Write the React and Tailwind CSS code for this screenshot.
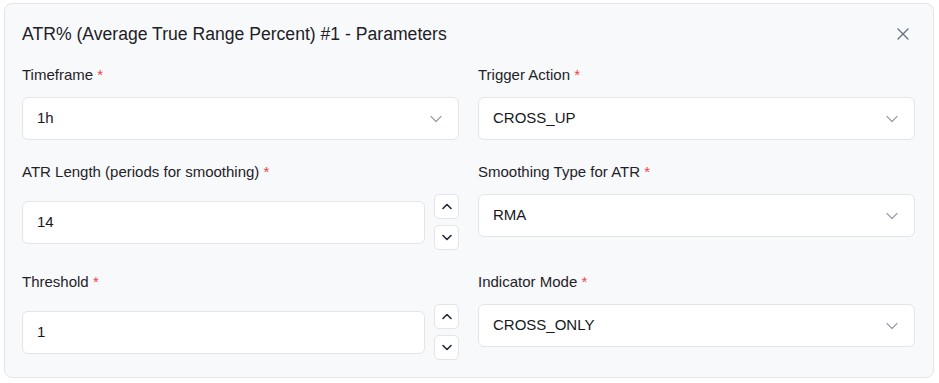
import React from "react";

const Chevron = ({ className = "" }) => (
  <svg width="12" height="8" viewBox="0 0 12 8" fill="none" className={className}>
    <path d="M1 1.5 L6 6.5 L11 1.5" stroke="currentColor" strokeWidth="1.3" strokeLinecap="round" strokeLinejoin="round" />
  </svg>
);

const Label = ({ children }) => (
  <div className="text-[15px] leading-5 text-[#1f2328] mb-3">
    {children} <span className="text-[#ef4444]">*</span>
  </div>
);

const SelectBox = ({ value }) => (
  <div className="h-[43px] w-full rounded-md border border-[#e3e5e8] bg-white flex items-center justify-between pl-[14px] pr-[16px] text-[15px] text-[#16181b]">
    <span>{value}</span>
    <Chevron className="text-[#9ca3af]" />
  </div>
);

const StepBtn = ({ up }) => (
  <button className="w-[25px] h-[25px] rounded-[5px] border border-[#e3e5e8] bg-white flex items-center justify-center text-[#1f2937]">
    <svg width="10" height="7" viewBox="0 0 10 7" fill="none">
      <path
        d={up ? "M1 5.5 L5 1.5 L9 5.5" : "M1 1.5 L5 5.5 L9 1.5"}
        stroke="currentColor"
        strokeWidth="1.6"
        strokeLinecap="round"
        strokeLinejoin="round"
      />
    </svg>
  </button>
);

const NumberField = ({ value }) => (
  <div className="flex items-center gap-[9px]">
    <div className="flex-1 h-[43px] rounded-md border border-[#e3e5e8] bg-white flex items-center pl-[14px] text-[15px] text-[#16181b]">
      {value}
    </div>
    <div className="flex flex-col gap-[6px]">
      <StepBtn up />
      <StepBtn />
    </div>
  </div>
);

export default function App() {
  return (
    <div className="bg-white w-[939px] h-[383px] pt-[3px] pl-[4px] font-['Liberation_Sans',Arial,sans-serif]">
      <div className="w-[930px] rounded-lg border border-[#e3e5e8] bg-[#f8f9fb] pl-[17px] pr-[18px] pt-[18px] pb-[17px]">
        <div className="flex items-center justify-between h-6 mb-[19px]">
          <h2 className="text-[17.6px] leading-6 text-[#1d2126]">
            ATR% (Average True Range Percent) #1 - Parameters
          </h2>
          <button className="mr-[5px] text-[#6b7280]">
            <svg width="14" height="14" viewBox="0 0 14 14" fill="none">
              <path d="M2 2 L12 12 M12 2 L2 12" stroke="currentColor" strokeWidth="1.4" strokeLinecap="round" />
            </svg>
          </button>
        </div>

        <div className="grid grid-cols-2 gap-x-[19px] gap-y-[22px]">
          <div>
            <Label>Timeframe</Label>
            <SelectBox value="1h" />
          </div>
          <div>
            <Label>Trigger Action</Label>
            <SelectBox value="CROSS_UP" />
          </div>

          <div>
            <Label>ATR Length (periods for smoothing)</Label>
            <NumberField value="14" />
          </div>
          <div>
            <Label>Smoothing Type for ATR</Label>
            <SelectBox value="RMA" />
          </div>

          <div>
            <Label>Threshold</Label>
            <NumberField value="1" />
          </div>
          <div>
            <Label>Indicator Mode</Label>
            <SelectBox value="CROSS_ONLY" />
          </div>
        </div>
      </div>
    </div>
  );
}
